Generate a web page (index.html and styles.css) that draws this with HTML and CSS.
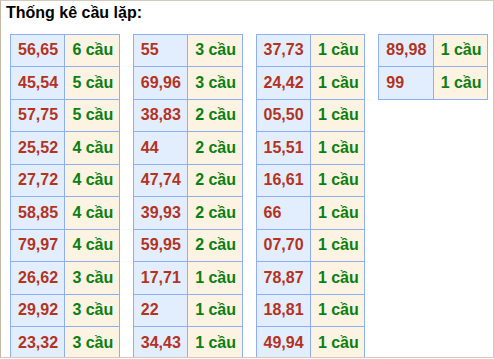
FILE: index.html
```html
<!DOCTYPE html>
<html>
<head>
<meta charset="utf-8">
<link rel="stylesheet" href="styles.css">
</head>
<body>
<div class="frame">
  <div class="title">Thống kê cầu lặp:</div>
  <div class="tables">
    <table class="lt">
      <tr><td class="num">56,65</td><td class="cnt">6 cầu</td></tr>
      <tr><td class="num">45,54</td><td class="cnt">5 cầu</td></tr>
      <tr><td class="num">57,75</td><td class="cnt">5 cầu</td></tr>
      <tr><td class="num">25,52</td><td class="cnt">4 cầu</td></tr>
      <tr><td class="num">27,72</td><td class="cnt">4 cầu</td></tr>
      <tr><td class="num">58,85</td><td class="cnt">4 cầu</td></tr>
      <tr><td class="num">79,97</td><td class="cnt">4 cầu</td></tr>
      <tr><td class="num">26,62</td><td class="cnt">3 cầu</td></tr>
      <tr><td class="num">29,92</td><td class="cnt">3 cầu</td></tr>
      <tr><td class="num">23,32</td><td class="cnt">3 cầu</td></tr>
    </table>
    <table class="lt">
      <tr><td class="num">55</td><td class="cnt">3 cầu</td></tr>
      <tr><td class="num">69,96</td><td class="cnt">3 cầu</td></tr>
      <tr><td class="num">38,83</td><td class="cnt">2 cầu</td></tr>
      <tr><td class="num">44</td><td class="cnt">2 cầu</td></tr>
      <tr><td class="num">47,74</td><td class="cnt">2 cầu</td></tr>
      <tr><td class="num">39,93</td><td class="cnt">2 cầu</td></tr>
      <tr><td class="num">59,95</td><td class="cnt">2 cầu</td></tr>
      <tr><td class="num">17,71</td><td class="cnt">1 cầu</td></tr>
      <tr><td class="num">22</td><td class="cnt">1 cầu</td></tr>
      <tr><td class="num">34,43</td><td class="cnt">1 cầu</td></tr>
    </table>
    <table class="lt">
      <tr><td class="num">37,73</td><td class="cnt">1 cầu</td></tr>
      <tr><td class="num">24,42</td><td class="cnt">1 cầu</td></tr>
      <tr><td class="num">05,50</td><td class="cnt">1 cầu</td></tr>
      <tr><td class="num">15,51</td><td class="cnt">1 cầu</td></tr>
      <tr><td class="num">16,61</td><td class="cnt">1 cầu</td></tr>
      <tr><td class="num">66</td><td class="cnt">1 cầu</td></tr>
      <tr><td class="num">07,70</td><td class="cnt">1 cầu</td></tr>
      <tr><td class="num">78,87</td><td class="cnt">1 cầu</td></tr>
      <tr><td class="num">18,81</td><td class="cnt">1 cầu</td></tr>
      <tr><td class="num">49,94</td><td class="cnt">1 cầu</td></tr>
    </table>
    <table class="lt">
      <tr><td class="num">89,98</td><td class="cnt">1 cầu</td></tr>
      <tr><td class="num">99</td><td class="cnt">1 cầu</td></tr>
    </table>
  </div>
</div>
</body>
</html>
```
FILE: styles.css
```css
html, body {
  margin: 0;
  padding: 0;
  background: #ffffff;
}
body {
  font-family: "Liberation Sans", Arial, sans-serif;
}
.frame {
  box-sizing: border-box;
  width: 494px;
  height: 358px;
  border: 1px solid #d2c9bb;
  border-left-color: #c4b9a6;
  padding: 2.5px 5px 0 5px;
  overflow: hidden;
}
.title {
  font-size: 16px;
  font-weight: bold;
  line-height: 18.4px;
  color: #000;
}
.tables {
  display: flex;
  align-items: flex-start;
  gap: 13px;
  margin: 12px 0 0 4px;
}
.lt {
  border-collapse: collapse;
  width: 110px;
  table-layout: fixed;
}
.lt td {
  width: 50%;
  border: 1px solid #8eaff2;
  padding: 6.5px 0 6.5px 7px;
  line-height: 18.5px;
  font-size: 16px;
  font-weight: bold;
  white-space: nowrap;
}
.num {
  background: #e2eefd;
  color: #b3331f;
}
.cnt {
  background: #fdf3e2;
  color: #0a8012;
}
```
